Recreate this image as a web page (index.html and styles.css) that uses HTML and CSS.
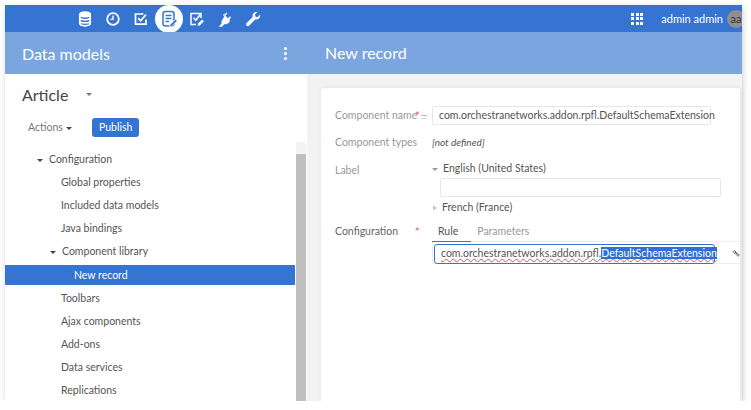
FILE: index.html
```html
<!DOCTYPE html>
<html lang="en">
<head>
    <meta charset="UTF-8">
    <title>Data models</title>
    <link rel="stylesheet" href="styles.css">
</head>
<body>
    <div class="window">
        <div class="topbar">
            <div class="nav">
                <div class="nav-item">
                    <svg viewBox="0 0 16 16" width="16" height="16" fill="none" stroke="#fff" stroke-width="1.7"><ellipse cx="8" cy="3.4" rx="5.2" ry="2.2" fill="#fff"/><path d="M2.8 3.4v9.2c0 1.2 2.3 2.2 5.2 2.2s5.2-1 5.2-2.2V3.4M2.8 6.6c0 1.2 2.3 2.2 5.2 2.2s5.2-1 5.2-2.2M2.8 9.7c0 1.2 2.3 2.2 5.2 2.2s5.2-1 5.2-2.2"/></svg>
                </div>
                <div class="nav-item">
                    <svg viewBox="0 0 16 16" width="16" height="16" fill="none" stroke="#fff" stroke-width="1.8"><circle cx="8" cy="8" r="5.8"/><path d="M8 4.6V8.4H5.4" stroke-width="1.4"/></svg>
                </div>
                <div class="nav-item">
                    <svg viewBox="0 0 16 16" width="16" height="16" fill="none" stroke="#fff" stroke-width="1.7"><path d="M13 8.5v4.7H2.5V3h8"/><path d="M5.2 7.2l2.4 2.6L13 3.6"/></svg>
                </div>
                <div class="nav-item active">
                    <svg viewBox="0 0 18 18" width="18" height="18" fill="none" stroke="#3574d1" stroke-width="1.5"><rect x="3" y="1.5" width="11" height="14.5" rx="2.4"/><path d="M5.5 5.5h6M5.5 8.5h6M5.5 11.5h3.5"/><path d="M10 14.5l5.6-5.2 1.7 1.7-5.4 5.2-2.4.4z" fill="#3574d1" stroke="#fff" stroke-width=".7"/></svg>
                </div>
                <div class="nav-item">
                    <svg viewBox="0 0 16 16" width="16" height="16" fill="none" stroke="#fff" stroke-width="1.5"><path d="M12 7v-4.5H2v11h5"/><path d="M4.6 6.8l2.2 2.4L11.4 3.4" stroke-width="1.7"/><path d="M8.6 14.8l.4-2.2 4.2-4.2 1.8 1.8-4.2 4.2z" fill="#fff" stroke="none"/></svg>
                </div>
                <div class="nav-item">
                    <svg viewBox="0 0 16 16" width="16" height="16" fill="#fff"><path d="M9.2 1.4l1.2 1.2-2 2 2.6 2.6 2-2 1.2 1.2-1.6 1.6c.5 1.5.1 3-1 4.1-1.1 1-2.6 1.3-4 .8l-2.5 2.6-.1.2H2l-.2-.3 2.9-3c-.5-1.4-.2-3 .9-4z"/><path d="M6 3.9l1.3-1.3 1 1-1.3 1.3z"/></svg>
                </div>
                <div class="nav-item">
                    <svg viewBox="0 0 16 16" width="16" height="16" fill="#fff"><path d="M15 3.6c.4 1.4 0 2.9-1 3.9-1 1-2.4 1.3-3.7 1L4.2 14.6c-.7.7-1.9.7-2.6 0-.7-.7-.7-1.8 0-2.5L7.7 6C7.3 4.6 7.7 3.1 8.700 2.100 9.700 1.100 11.200.800 12.500 1.100L10 3.600l.5 2.100 2.100.5z"/></svg>
                </div>
            </div>
            <div class="user-box">
                <div class="apps">
                    <span></span><span></span><span></span>
                    <span></span><span></span><span></span>
                    <span></span><span></span><span></span>
                </div>
                <span class="user-name">admin admin</span>
                <span class="avatar">aa</span>
            </div>
        </div>

        <div class="subbar">
            <div class="subbar-left">
                <span>Data models</span>
                <div class="dots"><i></i><i></i><i></i></div>
            </div>
            <div class="subbar-right">New record</div>
        </div>

        <div class="content">
            <div class="side">
                <div class="side-head">
                    <span class="side-title">Article</span>
                    <span class="caret small"></span>
                </div>
                <div class="side-actions">
                    <span class="actions">Actions <span class="caret dark"></span></span>
                    <span class="btn">Publish</span>
                </div>
                <div class="tree-wrap">
                    <div class="tree">
                        <div class="tree-row lvl1"><span class="caret dark"></span>Configuration</div>
                        <div class="tree-row lvl2">Global properties</div>
                        <div class="tree-row lvl2">Included data models</div>
                        <div class="tree-row lvl2">Java bindings</div>
                        <div class="tree-row lvl2 open"><span class="caret dark"></span>Component library</div>
                        <div class="tree-row lvl3 selected">New record</div>
                        <div class="tree-row lvl2">Toolbars</div>
                        <div class="tree-row lvl2">Ajax components</div>
                        <div class="tree-row lvl2">Add-ons</div>
                        <div class="tree-row lvl2">Data services</div>
                        <div class="tree-row lvl2">Replications</div>
                    </div>
                    <div class="scrollbar">
                        <div class="scroll-up"></div>
                        <div class="scroll-thumb"></div>
                    </div>
                </div>
            </div>

            <div class="main">
                <div class="card">
                    <div class="form-row name-row">
                        <label class="form-label">Component name</label>
                        <span class="mark"><i class="star">*</i><i class="lines"></i></span>
                        <div class="form-value"><div class="input">com.orchestranetworks.addon.rpfl.DefaultSchemaExtension</div></div>
                    </div>
                    <div class="form-row types-row">
                        <label class="form-label">Component types</label>
                        <span class="mark"></span>
                        <div class="form-value"><em>[not defined]</em></div>
                    </div>
                    <div class="form-row label-row">
                        <label class="form-label">Label</label>
                        <span class="mark"></span>
                        <div class="form-value">
                            <div class="lang"><span class="caret lang-open"></span>English (United States)</div>
                            <div class="input lang-input"></div>
                            <div class="lang"><span class="caret-right"></span>French (France)</div>
                        </div>
                    </div>
                    <div class="form-row config-row">
                        <label class="form-label dark-label">Configuration</label>
                        <span class="mark"><i class="star">*</i></span>
                        <div class="form-value">
                            <div class="tabs">
                                <span class="tab current">Rule</span>
                                <span class="tab">Parameters</span>
                            </div>
                            <div class="editor-line">
                                <div class="editor"><span class="squiggle">com.orchestranetworks.addon.rpfl.<span class="picked">DefaultSchemaExtension</span></span></div>
                                <svg class="link-icon" viewBox="0 0 12 12" width="10" height="10" fill="none" stroke="#666" stroke-width="1.5"><path d="M1.500 4l2-2 3 3-2 2zM6 8l2-2 3 3-2 2zM4 4l4 4"/></svg>
                            </div>
                        </div>
                    </div>
                </div>
            </div>
        </div>
    </div>
</body>
</html>
```

FILE: styles.css
```css
body {
    margin: 0;
    padding: 5px 0 0 5px;
    background-color: #fff;
    font-family: Lato, "Open Sans", sans-serif;
    font-size: 11px;
    color: #555;
    overflow: hidden;
}
.window {
    width: 737px;
    height: 396px;
    display: flex;
    flex-direction: column;
    background-color: #f2f2f2;
    box-shadow: 1px 2px 6px rgba(0, 0, 0, 0.2);
}

/* top bar */
.topbar {
    height: 27px;
    flex: none;
    display: flex;
    justify-content: space-between;
    align-items: center;
    background-color: #3574d1;
    color: #fff;
}
.nav {
    display: flex;
    align-items: center;
    padding-left: 66px;
}
.nav-item {
    width: 28px;
    height: 28px;
    display: flex;
    justify-content: center;
    align-items: center;
    border-radius: 50%;
}
.nav-item.active {
    background-color: #fff;
}
.user-box {
    display: flex;
    align-items: center;
    height: 27px;
    overflow: hidden;
}
.apps {
    width: 12px;
    display: grid;
    grid-template-columns: repeat(3, 3px);
    gap: 1.5px;
    margin-right: 18px;
}
.apps span {
    height: 3px;
    background-color: #fff;
}
.user-name {
    font-size: 11px;
    margin-right: 4px;
}
.avatar {
    width: 18px;
    height: 18px;
    margin-right: -3px;
    border-radius: 50%;
    background-color: #8f8f8f;
    color: #333;
    font-size: 11px;
    line-height: 17px;
    text-align: center;
}

/* second bar */
.subbar {
    height: 42px;
    flex: none;
    display: flex;
    background-color: #7aa5de;
    color: #fff;
    font-size: 16px;
}
.subbar-left {
    width: 302px;
    padding: 0 17px;
    box-sizing: border-box;
    display: flex;
    justify-content: space-between;
    align-items: center;
}
.subbar-right {
    padding-left: 18px;
    line-height: 41px;
}
.dots {
    display: flex;
    flex-direction: column;
    gap: 2px;
    margin-right: 3px;
}
.dots i {
    width: 3px;
    height: 3px;
    border-radius: 50%;
    background-color: #fff;
}

.content {
    flex: 1;
    display: flex;
    min-height: 0;
}

/* left side */
.side {
    width: 302px;
    flex: none;
    display: flex;
    flex-direction: column;
    background-color: #fff;
}
.side-head {
    height: 41px;
    padding-left: 17px;
    display: flex;
    align-items: center;
}
.side-title {
    font-size: 16px;
    color: #444;
    margin-right: 18px;
}
.side-actions {
    height: 24px;
    display: flex;
    align-items: center;
    padding-left: 23px;
    font-size: 10.5px;
    color: #777;
}
.actions {
    width: 64px;
}
.btn {
    padding: 0 7px;
    height: 19px;
    line-height: 18px;
    border-radius: 3px;
    background-color: #3574d1;
    color: #fff;
}
.caret {
    display: inline-block;
    border-style: solid;
    border-width: 3.5px 3.5px 0;
    border-color: #555 transparent transparent;
    vertical-align: middle;
}
.caret.small {
    border-width: 3px 3px 0;
    border-top-color: #777;
}
.caret.dark {
    border-top-color: #444;
}
.tree-wrap {
    flex: 1;
    min-height: 0;
    display: flex;
    padding-top: 9px;
}
.tree {
    width: 290px;
    font-size: 10.5px;
    padding-top: 0;
}
.tree-row {
    height: 23.1px;
    line-height: 23.1px;
    white-space: nowrap;
}
.tree-row .caret {
    margin-right: 6px;
}
.lvl1 {
    padding-left: 32px;
}
.lvl2 {
    padding-left: 56px;
}
.lvl2.open {
    padding-left: 45px;
}
.lvl3 {
    padding-left: 69px;
}
.tree-row.selected {
    height: 20px;
    line-height: 20px;
    margin: 1.500px 0 1.600px;
    background-color: #3574d1;
    color: #fff;
}
.scrollbar {
    width: 10px;
    margin-left: 1px;
    display: flex;
    flex-direction: column;
    margin-top: -6px;
}
.scroll-up {
    height: 12px;
    flex: none;
    background-color: #f4f4f4;
}
.scroll-thumb {
    flex: 1;
    background-color: #c0c0c0;
}

/* right side */
.main {
    flex: 1;
    min-width: 0;
    padding: 14px 2px 0 14px;
}
.card {
    height: 100%;
    box-sizing: border-box;
    padding: 18px 0 0 14px;
    background-color: #fff;
    border-radius: 3px 3px 0 0;
    box-shadow: 1px 0 4px rgba(0, 0, 0, 0.08);
    overflow: hidden;
}
.form-row {
    display: flex;
}
.form-label {
    width: 80px;
    flex: none;
    font-size: 10.5px;
    color: #999;
    line-height: 19px;
    white-space: nowrap;
}
.form-label.dark-label {
    color: #666;
}
.mark {
    width: 17px;
    flex: none;
    display: flex;
    line-height: 19px;
}
.star {
    color: #e25555;
    font-style: normal;
}
.lines {
    width: 6px;
    height: 2px;
    margin: 9px 0 0 1px;
    border-top: 1px solid #d8b0a8;
    border-bottom: 1px solid #d8d8d8;
}
.form-value {
    flex: 1;
    min-width: 0;
    font-size: 10.5px;
    line-height: 19px;
}
.input {
    width: 279px;
    height: 19px;
    box-sizing: border-box;
    padding-left: 6px;
    border: 1px solid #e6e6e6;
    border-radius: 2px;
    line-height: 17px;
    white-space: nowrap;
    color: #555;
}
.types-row {
    margin-top: 8px;
}
.types-row em {
    font-size: 10px;
    color: #555;
}
.label-row {
    margin-top: 9px;
}
.lang {
    height: 15px;
    line-height: 15px;
}
.lang-open {
    margin-right: 5px;
    border-top-color: #999;
}
.caret-right {
    display: inline-block;
    margin: 0 5px 0 1px;
    border-style: solid;
    border-width: 3px 0 3px 4px;
    border-color: transparent transparent transparent #ccc;
    vertical-align: middle;
}
.lang-input {
    width: 281px;
    margin: 2px 0 3px 8px;
}
.config-row {
    margin-top: 7px;
}
.tabs {
    display: flex;
    height: 20px;
}
.tab {
    padding: 0 8px 0 6px;
    color: #999;
    margin-right: 8px;
}
.tab.current {
    padding: 0 13px 0 6px;
    color: #555;
    margin-right: 0;
    height: 20px;
    border-bottom: 1px solid #3574d1;
    box-sizing: border-box;
}
.editor-line {
    height: 23px;
    box-sizing: border-box;
    padding: 2px 0 0 1px;
    display: flex;
    align-items: flex-start;
    border: 1px solid #eee;
    border-right: 0;
    margin-top: -1px;
    margin-right: 0;
}
.editor {
    width: 281px;
    height: 20px;
    flex: none;
    box-sizing: border-box;
    padding-left: 6px;
    border: 1.500px solid #3574d1;
    border-radius: 3px;
    line-height: 17px;
    white-space: nowrap;
}
.squiggle {
    text-decoration: underline wavy #e05050 1px;
}
.picked {
    background-color: #2f6fd6;
    color: #fff;
}
.link-icon {
    margin: 4px 0 0 17px;
}
```
